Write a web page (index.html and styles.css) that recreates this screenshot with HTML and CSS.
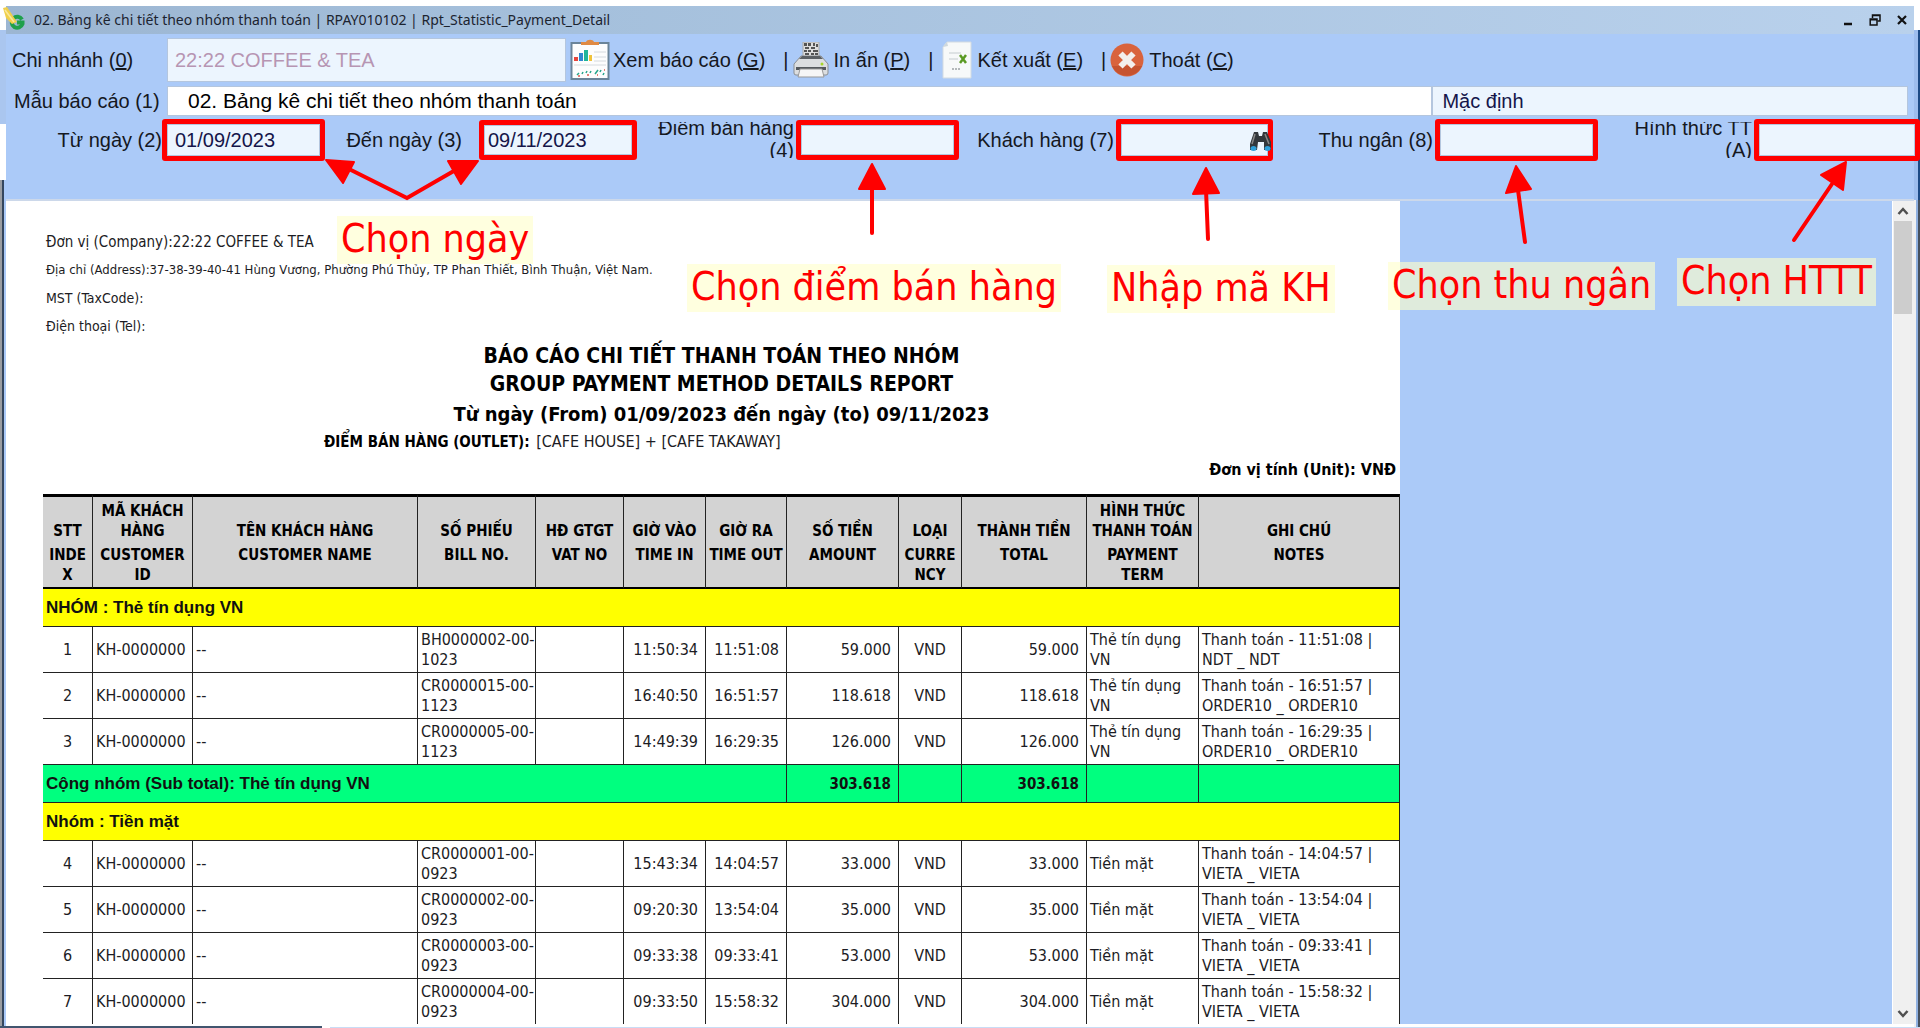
FILE: index.html
```html
<!DOCTYPE html>
<html lang="vi">
<head>
<meta charset="utf-8">
<title>02. Bảng kê chi tiết theo nhóm thanh toán</title>
<link rel="stylesheet" href="styles.css">
</head>
<body>
<div class="desktop">
<main class="window">
  <header class="titlebar">
    <svg class="app-icon" width="24" height="26" viewBox="0 0 24 26"><path d="M20 12.500A5.500 5.500 0 1 0 20.500 17V15.500H15" fill="none" stroke="#1fa04b" stroke-width="4"/><path d="M1 1L5 0L15 15L10 17L4 11Z" fill="#f0cf4a"/><path d="M3 3L12 15" stroke="#fae99a" stroke-width="1.500"/></svg>
    <h1 class="window-title">02. Bảng kê chi tiết theo nhóm thanh toán | RPAY010102 | Rpt_Statistic_Payment_Detail</h1>
    <div class="window-buttons">
      <button type="button" aria-label="Minimize"><svg width="12" height="12" viewBox="0 0 12 12"><path d="M2 10H10" stroke="#111" stroke-width="2.500"/></svg></button>
      <button type="button" aria-label="Restore"><svg width="12" height="12" viewBox="0 0 12 12"><path d="M3.500 4V1H11V7H8.500M3 1.500H11.500" fill="none" stroke="#111" stroke-width="1.500"/><path d="M1.200 5H8V11H1.200ZM1 5.700H8" fill="none" stroke="#111" stroke-width="1.500"/></svg></button>
      <button type="button" aria-label="Close"><svg width="12" height="12" viewBox="0 0 12 12"><path d="M2 2L10 10M10 2L2 10" stroke="#111" stroke-width="2.200"/></svg></button>
    </div>
  </header>

  <form class="panel">
    <div class="toolbar">
      <label class="lead" for="branch">Chi nhánh (<u>0</u>)</label>
      <input class="field branch" id="branch" value="22:22 COFFEE &amp; TEA" readonly>
      <button type="button" class="tool tool-view">
        <svg width="42" height="42" viewBox="0 0 42 42"><rect x="1.500" y="4" width="37" height="36" fill="#fdfdfd" stroke="#6b8499" stroke-width="2"/><path d="M11 6V3H16C17 0 23 0 24 3H29V6Z" fill="#e08a43"/><rect x="4" y="18" width="4" height="4" fill="#e8453c"/><rect x="9" y="14" width="4" height="8" fill="#2f86d0"/><rect x="14" y="11" width="4" height="11" fill="#1fb59a"/><rect x="19" y="16" width="3" height="6" fill="#f0c23a"/><path d="M24 13H36M24 18H36M24 22H36M4 26H36" stroke="#d5dade"/><path d="M7 36L9 34M12 35L13 33M16 34L17 32M20 34L21 32M25 35L28 31M30 33L31 31M33 36L34 34" stroke="#27a58b" stroke-width="1.500"/><path d="M8 37H10M17 36H19M27 36H28M34 31H35" stroke="#e0584c" stroke-width="1.500"/></svg>
        <span>Xem báo cáo (<u>G</u>)</span></button>
      <span class="bar">|</span>
      <button type="button" class="tool">
        <svg width="36" height="36" viewBox="0 0 36 36"><rect x="10" y="0" width="16" height="17" fill="#ddd" stroke="#aaa"/><path d="M11 1h3v3h-3zM15 1h3v3h-3zM20 1h2v3h-2zM23 2h2v3h-2zM12 5h4v2h-4zM18 5h4v2h-4zM11 8h3v2h-3zM15 8h3v2h-3zM20 8h5v2h-5zM12 11h4v2h-4zM18 11h3v2h-3zM22 11h3v2h-3z" fill="#555"/><path d="M8 14H28L35 22V31Q35 33 33 33H3Q1 33 1 31V22Z" fill="#dcdee0" stroke="#8b8f93"/><path d="M9 14H27L30 17H6Z" fill="#5c6064"/><path d="M3 25H33V28H3Z" fill="#55595d"/><path d="M7 27H29L31 35H5Z" fill="#f6f6f6" stroke="#999"/><circle cx="29" cy="22" r="1.500" fill="#a5d629"/></svg>
        <span>In ấn (<u>P</u>)</span></button>
      <span class="bar">|</span>
      <button type="button" class="tool tool-export">
        <svg width="30" height="38" viewBox="0 0 30 38"><path d="M5 1H29V37H1V6Z" fill="#f7f9f9" stroke="#d3dbe1"/><path d="M1 6L6 5L5 1Z" fill="#cfd8dc"/><path d="M7 12H19M7 18H16" stroke="#c5cccf"/><path d="M18 14L24 22M24 14L18 22" stroke="#5a9a23" stroke-width="2.500"/><path d="M10 28H19" stroke="#b3b8ba" stroke-width="2" stroke-dasharray="2 1"/></svg>
        <span>Kết xuất (<u>E</u>)</span></button>
      <span class="bar">|</span>
      <button type="button" class="tool">
        <svg width="34" height="34" viewBox="0 0 34 34"><circle cx="17" cy="17" r="16.500" fill="#d9633c"/><path d="M2 23A16.500 16.500 0 0 0 32 23Z" fill="#c6532f"/><path d="M10.500 10.500L23.500 23.500M23.500 10.500L10.500 23.500" stroke="#f3efec" stroke-width="6"/></svg>
        <span>Thoát (<u>C</u>)</span></button>
    </div>

    <div class="template">
      <label class="lead" for="template">Mẫu báo cáo (1)</label>
      <input class="field template-name" id="template" value="02. Bảng kê chi tiết theo nhóm thanh toán">
      <input class="field template-kind" aria-label="Kiểu mẫu" value="Mặc định">
    </div>

    <div class="filters">
      <label class="tight" for="from">Từ ngày (2)</label>
      <div class="marked f-from">
        <input class="field" id="from" value="01/09/2023">
        <svg class="arrow" width="170" height="50" viewBox="0 0 170 50"><path d="M24 9L84 39L136 9" fill="none" stroke="red" stroke-width="4"/><path d="M3 1L31 3L20 24ZM155 2L125 2L138 25Z" fill="red" stroke="red" stroke-width="2" stroke-linejoin="round"/></svg>
        <strong class="callout">Chọn ngày</strong>
      </div>
      <label class="spaced" for="to">Đến ngày (3)</label>
      <div class="marked f-to"><input class="field" id="to" value="09/11/2023"></div>
      <label class="wrapped" for="outlet">Điểm bán hàng (4)</label>
      <div class="marked f-outlet">
        <input class="field" id="outlet">
        <svg class="arrow" width="30" height="76" viewBox="0 0 30 76"><path d="M15 24V73" stroke="red" stroke-width="4" stroke-linecap="round"/><path d="M15 4L28 29H2Z" fill="red" stroke="red" stroke-width="2" stroke-linejoin="round"/></svg>
        <strong class="callout">Chọn điểm bán hàng</strong>
      </div>
      <label for="customer">Khách hàng (7)</label>
      <div class="marked f-customer">
        <input class="field" id="customer">
        <svg class="find" width="22" height="22" viewBox="0 0 22 22"><path d="M5 2H9L10 6H13L14 2H18L22 12V20H15V12H9L8 20H1V14Z" fill="#33373b"/><path d="M6 4L3 14M16 4L20 14" stroke="#888" stroke-width="1.500"/><ellipse cx="4.500" cy="18.500" rx="3" ry="2.500" fill="#2f9fd8"/><ellipse cx="18.500" cy="18.500" rx="3" ry="2.500" fill="#2f9fd8"/></svg>
        <svg class="arrow" width="30" height="76" viewBox="0 0 30 76"><path d="M15 24L17 73" stroke="red" stroke-width="4" stroke-linecap="round"/><path d="M15 2L28 27L2 28Z" fill="red" stroke="red" stroke-width="2" stroke-linejoin="round"/></svg>
        <strong class="callout">Nhập mã KH</strong>
      </div>
      <label for="cashier">Thu ngân (8)</label>
      <div class="marked f-cashier">
        <input class="field" id="cashier">
        <svg class="arrow" width="30" height="82" viewBox="0 0 30 82"><path d="M15 26L22 78" stroke="red" stroke-width="4" stroke-linecap="round"/><path d="M13 2L28 25L3 29Z" fill="red" stroke="red" stroke-width="2" stroke-linejoin="round"/></svg>
        <strong class="callout">Chọn thu ngân</strong>
      </div>
      <label class="wrapped" for="method">Hình thức TT (A)</label>
      <div class="marked f-method">
        <input class="field" id="method">
        <svg class="arrow" width="60" height="84" viewBox="0 0 60 84"><path d="M42 24L4 80" stroke="red" stroke-width="4" stroke-linecap="round"/><path d="M56 2L53 30L31 15Z" fill="red" stroke="red" stroke-width="2" stroke-linejoin="round"/></svg>
        <strong class="callout">Chọn HTTT</strong>
      </div>
    </div>
  </form>

  <section class="viewer">
    <article class="paper">
      <div class="company">
        <p>Đơn vị (Company):22:22 COFFEE &amp; TEA</p>
        <p class="address">Địa chỉ (Address):37-38-39-40-41 Hùng Vương, Phường Phú Thủy, TP Phan Thiết, Bình Thuận, Việt Nam.</p>
        <p class="small">MST (TaxCode):</p>
        <p class="small">Điện thoại (Tel):</p>
      </div>
      <h2 class="report-title">BÁO CÁO CHI TIẾT THANH TOÁN THEO NHÓM</h2>
      <h2 class="report-title">GROUP PAYMENT METHOD DETAILS REPORT</h2>
      <h3 class="report-range">Từ ngày (From) 01/09/2023 đến ngày (to) 09/11/2023</h3>
      <p class="outlet"><b>ĐIỂM BÁN HÀNG (OUTLET):</b> <span>[CAFE HOUSE] + [CAFE TAKAWAY]</span></p>
      <p class="unit">Đơn vị tính (Unit): VNĐ</p>

      <table class="report">
        <colgroup><col class="w-idx"><col class="w-cid"><col class="w-name"><col class="w-bill"><col class="w-vat"><col class="w-in"><col class="w-out"><col class="w-amt"><col class="w-cur"><col class="w-tot"><col class="w-term"><col class="w-note"></colgroup>
        <thead>
          <tr class="vi"><th>STT</th><th>MÃ KHÁCH<br>HÀNG</th><th>TÊN KHÁCH HÀNG</th><th>SỐ PHIẾU</th><th>HĐ GTGT</th><th>GIỜ VÀO</th><th>GIỜ RA</th><th>SỐ TIỀN</th><th>LOẠI</th><th>THÀNH TIỀN</th><th>HÌNH THỨC<br>THANH TOÁN</th><th>GHI CHÚ</th></tr>
          <tr class="en"><th>INDE<br>X</th><th>CUSTOMER<br>ID</th><th>CUSTOMER NAME</th><th>BILL NO.</th><th>VAT NO</th><th>TIME IN</th><th>TIME OUT</th><th>AMOUNT</th><th>CURRE<br>NCY</th><th>TOTAL</th><th>PAYMENT<br>TERM</th><th>NOTES</th></tr>
        </thead>
        <tbody>
          <tr class="group"><td colspan="12">NHÓM : Thẻ tín dụng VN</td></tr>
          <tr><td class="c">1</td><td>KH-0000000</td><td>--</td><td>BH0000002-00-<br>1023</td><td></td><td class="r">11:50:34</td><td class="r">11:51:08</td><td class="r">59.000</td><td class="c">VND</td><td class="r">59.000</td><td>Thẻ tín dụng<br>VN</td><td>Thanh toán - 11:51:08 |<br>NDT _ NDT</td></tr>
          <tr><td class="c">2</td><td>KH-0000000</td><td>--</td><td>CR0000015-00-<br>1123</td><td></td><td class="r">16:40:50</td><td class="r">16:51:57</td><td class="r">118.618</td><td class="c">VND</td><td class="r">118.618</td><td>Thẻ tín dụng<br>VN</td><td>Thanh toán - 16:51:57 |<br>ORDER10 _ ORDER10</td></tr>
          <tr><td class="c">3</td><td>KH-0000000</td><td>--</td><td>CR0000005-00-<br>1123</td><td></td><td class="r">14:49:39</td><td class="r">16:29:35</td><td class="r">126.000</td><td class="c">VND</td><td class="r">126.000</td><td>Thẻ tín dụng<br>VN</td><td>Thanh toán - 16:29:35 |<br>ORDER10 _ ORDER10</td></tr>
          <tr class="subtotal"><td class="group-name" colspan="7">Cộng nhóm (Sub total): Thẻ tín dụng VN</td><td class="r">303.618</td><td></td><td class="r">303.618</td><td></td><td></td></tr>
          <tr class="group"><td colspan="12">Nhóm : Tiền mặt</td></tr>
          <tr><td class="c">4</td><td>KH-0000000</td><td>--</td><td>CR0000001-00-<br>0923</td><td></td><td class="r">15:43:34</td><td class="r">14:04:57</td><td class="r">33.000</td><td class="c">VND</td><td class="r">33.000</td><td>Tiền mặt</td><td>Thanh toán - 14:04:57 |<br>VIETA _ VIETA</td></tr>
          <tr><td class="c">5</td><td>KH-0000000</td><td>--</td><td>CR0000002-00-<br>0923</td><td></td><td class="r">09:20:30</td><td class="r">13:54:04</td><td class="r">35.000</td><td class="c">VND</td><td class="r">35.000</td><td>Tiền mặt</td><td>Thanh toán - 13:54:04 |<br>VIETA _ VIETA</td></tr>
          <tr><td class="c">6</td><td>KH-0000000</td><td>--</td><td>CR0000003-00-<br>0923</td><td></td><td class="r">09:33:38</td><td class="r">09:33:41</td><td class="r">53.000</td><td class="c">VND</td><td class="r">53.000</td><td>Tiền mặt</td><td>Thanh toán - 09:33:41 |<br>VIETA _ VIETA</td></tr>
          <tr><td class="c">7</td><td>KH-0000000</td><td>--</td><td>CR0000004-00-<br>0923</td><td></td><td class="r">09:33:50</td><td class="r">15:58:32</td><td class="r">304.000</td><td class="c">VND</td><td class="r">304.000</td><td>Tiền mặt</td><td>Thanh toán - 15:58:32 |<br>VIETA _ VIETA</td></tr>
        </tbody>
      </table>
    </article>
    <div class="scrollbar">
      <button type="button" aria-label="Scroll up"><svg width="12" height="10" viewBox="0 0 12 10"><path d="M1.500 8L6 3L10.500 8" fill="none" stroke="#505050" stroke-width="2.500"/></svg></button>
      <div class="thumb"></div>
      <button type="button" class="down" aria-label="Scroll down"><svg width="12" height="10" viewBox="0 0 12 10"><path d="M1.500 2L6 7L10.500 2" fill="none" stroke="#505050" stroke-width="2.500"/></svg></button>
    </div>
  </section>
</main>
</div>
</body>
</html>
```
FILE: styles.css
```css
* { box-sizing: border-box; }
body {
  margin: 0;
  background: #fff;
  color: #15181f;
  font-family: "Liberation Sans", Arial, sans-serif;
  font-size: 20px;
}
p, h1, h2, h3 { margin: 0; }
button { border: 0; padding: 0; background: none; font: inherit; color: inherit; }
svg { display: block; flex: none; }

.desktop {
  height: 100vh;
  padding: 6px 6px 4px;
  overflow: hidden;
  background:
    linear-gradient(#41556f, #41556f) left bottom / 322px 2px no-repeat,
    linear-gradient(#c9dcf5, #c9dcf5) right bottom / calc(100% - 330px) 1px no-repeat,
    linear-gradient(#aac6ef, #aac6ef) 0 30px / 6px 94px no-repeat,
    linear-gradient(90deg, #9a9da2 2px, #34465e 2px 4px, #abcaf8 4px) 0 180px / 6px 100% no-repeat,
    linear-gradient(90deg, #9dbdee 4px, #1c4a86 4px) right 30px / 6px 170px no-repeat,
    linear-gradient(90deg, #f0f0f0 2px, #8fb0e0 2px 4px, #46505e 4px) right 200px / 6px 100% no-repeat,
    #fff;
}
.window { display: flex; flex-direction: column; height: 100%; background: #abcaf8; }

.titlebar {
  display: flex;
  align-items: center;
  flex: none;
  height: 28px;
  padding-right: 6px;
  background: linear-gradient(90deg, #9cb6d2, #a5c0dc 30%, #b9d1ec);
}
.app-icon { margin-left: -4px; }
.window-title { flex: 1; margin-left: 8px; font: 14px/20px "Noto Sans", "Open Sans", sans-serif; color: #1c2430; }
.window-buttons { display: flex; gap: 15px; }

.panel { position: relative; z-index: 1; flex: none; height: 167px; border-bottom: 2px solid #ccd8ea; }
.lead { flex: 0 0 161px; padding-left: 6px; white-space: nowrap; }
.field {
  min-width: 0;
  border: 1px solid #b4c6de;
  padding: 0 7px;
  background: #ecf5fe;
  color: #15154a;
  font: 20px/24px "Liberation Sans", Arial, sans-serif;
}
.toolbar { display: flex; align-items: center; height: 52px; }
.branch { flex: 0 0 399px; height: 44px; color: #b795b3; }
.tool { display: flex; align-items: center; gap: 5px; white-space: nowrap; }
.tool-view { margin-left: 4px; gap: 1px; }
.tool-export { margin-left: 5px; }
.bar { margin-left: 18px; margin-right: 4px; }

.template { display: flex; align-items: center; height: 30px; padding-right: 6px; }
.template .lead { padding-left: 8px; }
.template-name { flex: 1270 1 0; height: 30px; padding-left: 20px; background: #fff; color: #000; font-size: 21px; }
.template-kind { flex: 470 1 0; height: 30px; padding-left: 9px; }

.filters {
  display: grid;
  grid-template-columns: 156fr 163fr 154fr 158fr 159fr 163fr 157fr 157fr 162fr 163fr 156fr 160fr;
  align-items: center;
  height: 46px;
  padding-top: 2px;
}
.filters label {
  display: flex;
  align-items: center;
  justify-content: flex-end;
  height: 36px;
  padding: 0 2px 0 14px;
  overflow: hidden;
  line-height: 22px;
  text-align: right;
}
.filters .tight { padding-right: 0; }
.filters .spaced { padding-right: 17px; }
.filters .wrapped { padding-bottom: 3px; }
.marked { position: relative; height: 42px; border: 5px solid red; border-radius: 3px; }
.marked .field { display: block; width: 100%; height: 100%; }
.f-to, .f-outlet { height: 40px; }
.marked #to { padding-left: 3px; }
.f-method { margin-right: -6px; }
.arrow { position: absolute; pointer-events: none; }
.callout {
  position: absolute;
  padding: 0 4px 2px;
  background: rgba(255, 255, 203, 0.62);
  color: red;
  font: 39px/46px "DejaVu Sans Condensed", "Noto Sans", sans-serif;
  white-space: nowrap;
}
.find { position: absolute; right: -3px; top: 6px; }
.f-from .arrow { left: 156px; top: 35px; }
.f-from .callout { left: 170px; top: 92px; }
.f-outlet .arrow { left: 56px; top: 35px; }
.f-outlet .callout { left: -114px; top: 139px; }
.f-customer .arrow { left: 70px; top: 42px; }
.f-customer .callout { left: -14px; top: 141px; }
.f-cashier .arrow { left: 63px; top: 40px; }
.f-cashier .callout { left: -52px; top: 138px; }
.f-method .arrow { left: 31px; top: 36px; }
.f-method .callout { left: -82px; top: 134px; }

.viewer { display: flex; flex: 1; min-height: 0; justify-content: space-between; }
.paper {
  flex: none;
  width: 1394px;
  padding: 27px 0 0 37px;
  overflow: hidden;
  background: #fff;
  color: #1c1c24;
  font: 16px/20px "DejaVu Sans Condensed", "Noto Sans", sans-serif;
}
.company { padding-left: 3px; font-size: 15px; line-height: 28px; }
.company .small { font-size: 14px; }
.company .address { font-size: 13px; }
.report-title, .report-range { font-weight: bold; font-size: 21px; line-height: 28px; text-align: center; color: #000; }
.report-title:first-of-type { margin-top: 2px; }
.report-range { font-size: 20px; line-height: 32px; }
.outlet { padding-left: 281px; line-height: 24px; }
.outlet b { margin-right: 2px; color: #000; font-size: 15px; }
.unit { padding: 4px 4px 0 0; line-height: 24px; font-weight: bold; text-align: right; color: #000; }

.report { width: 100%; margin-top: 12px; table-layout: fixed; border-spacing: 0; }
.w-idx { width: 50px; } .w-cid { width: 100px; } .w-name { width: 225px; } .w-bill { width: 118px; }
.w-vat { width: 88px; } .w-in { width: 82px; } .w-out { width: 81px; } .w-amt { width: 112px; }
.w-cur { width: 63px; } .w-tot { width: 125px; } .w-term { width: 112px; }
.report th { padding: 0; border-right: 1px solid #222; background: #d3d3d3; color: #000; font-size: 15px; white-space: nowrap; }
.vi th { height: 49px; padding-bottom: 2px; border-top: 3px solid #000; vertical-align: bottom; }
.en th { height: 46px; padding-top: 2px; border-bottom: 2px solid #000; vertical-align: top; }
.report td { height: 46px; padding: 0 3px; border-right: 1px solid #222; border-bottom: 1px solid #222; white-space: nowrap; }
.report .c { text-align: center; }
.report .r { padding-right: 7px; text-align: right; }
.report .group td, .report .subtotal td { height: 38px; color: #111; font-size: 15px; font-weight: bold; }
.report .group td, .report .subtotal .group-name { font: bold 17px/20px "Liberation Sans", Arial, sans-serif; }
.group td { background: #ff0; }
.subtotal td { background: #00ff7f; }

.scrollbar { display: flex; flex-direction: column; flex: 0 0 22px; padding: 0 2px 0 1px; background: #f0f0f0; border-left: 1px solid #fff; }
.scrollbar button { display: flex; align-items: center; justify-content: center; height: 20px; }
.thumb { height: 93px; background: #cdcdcd; }
.scrollbar .down { margin-top: auto; }
```
